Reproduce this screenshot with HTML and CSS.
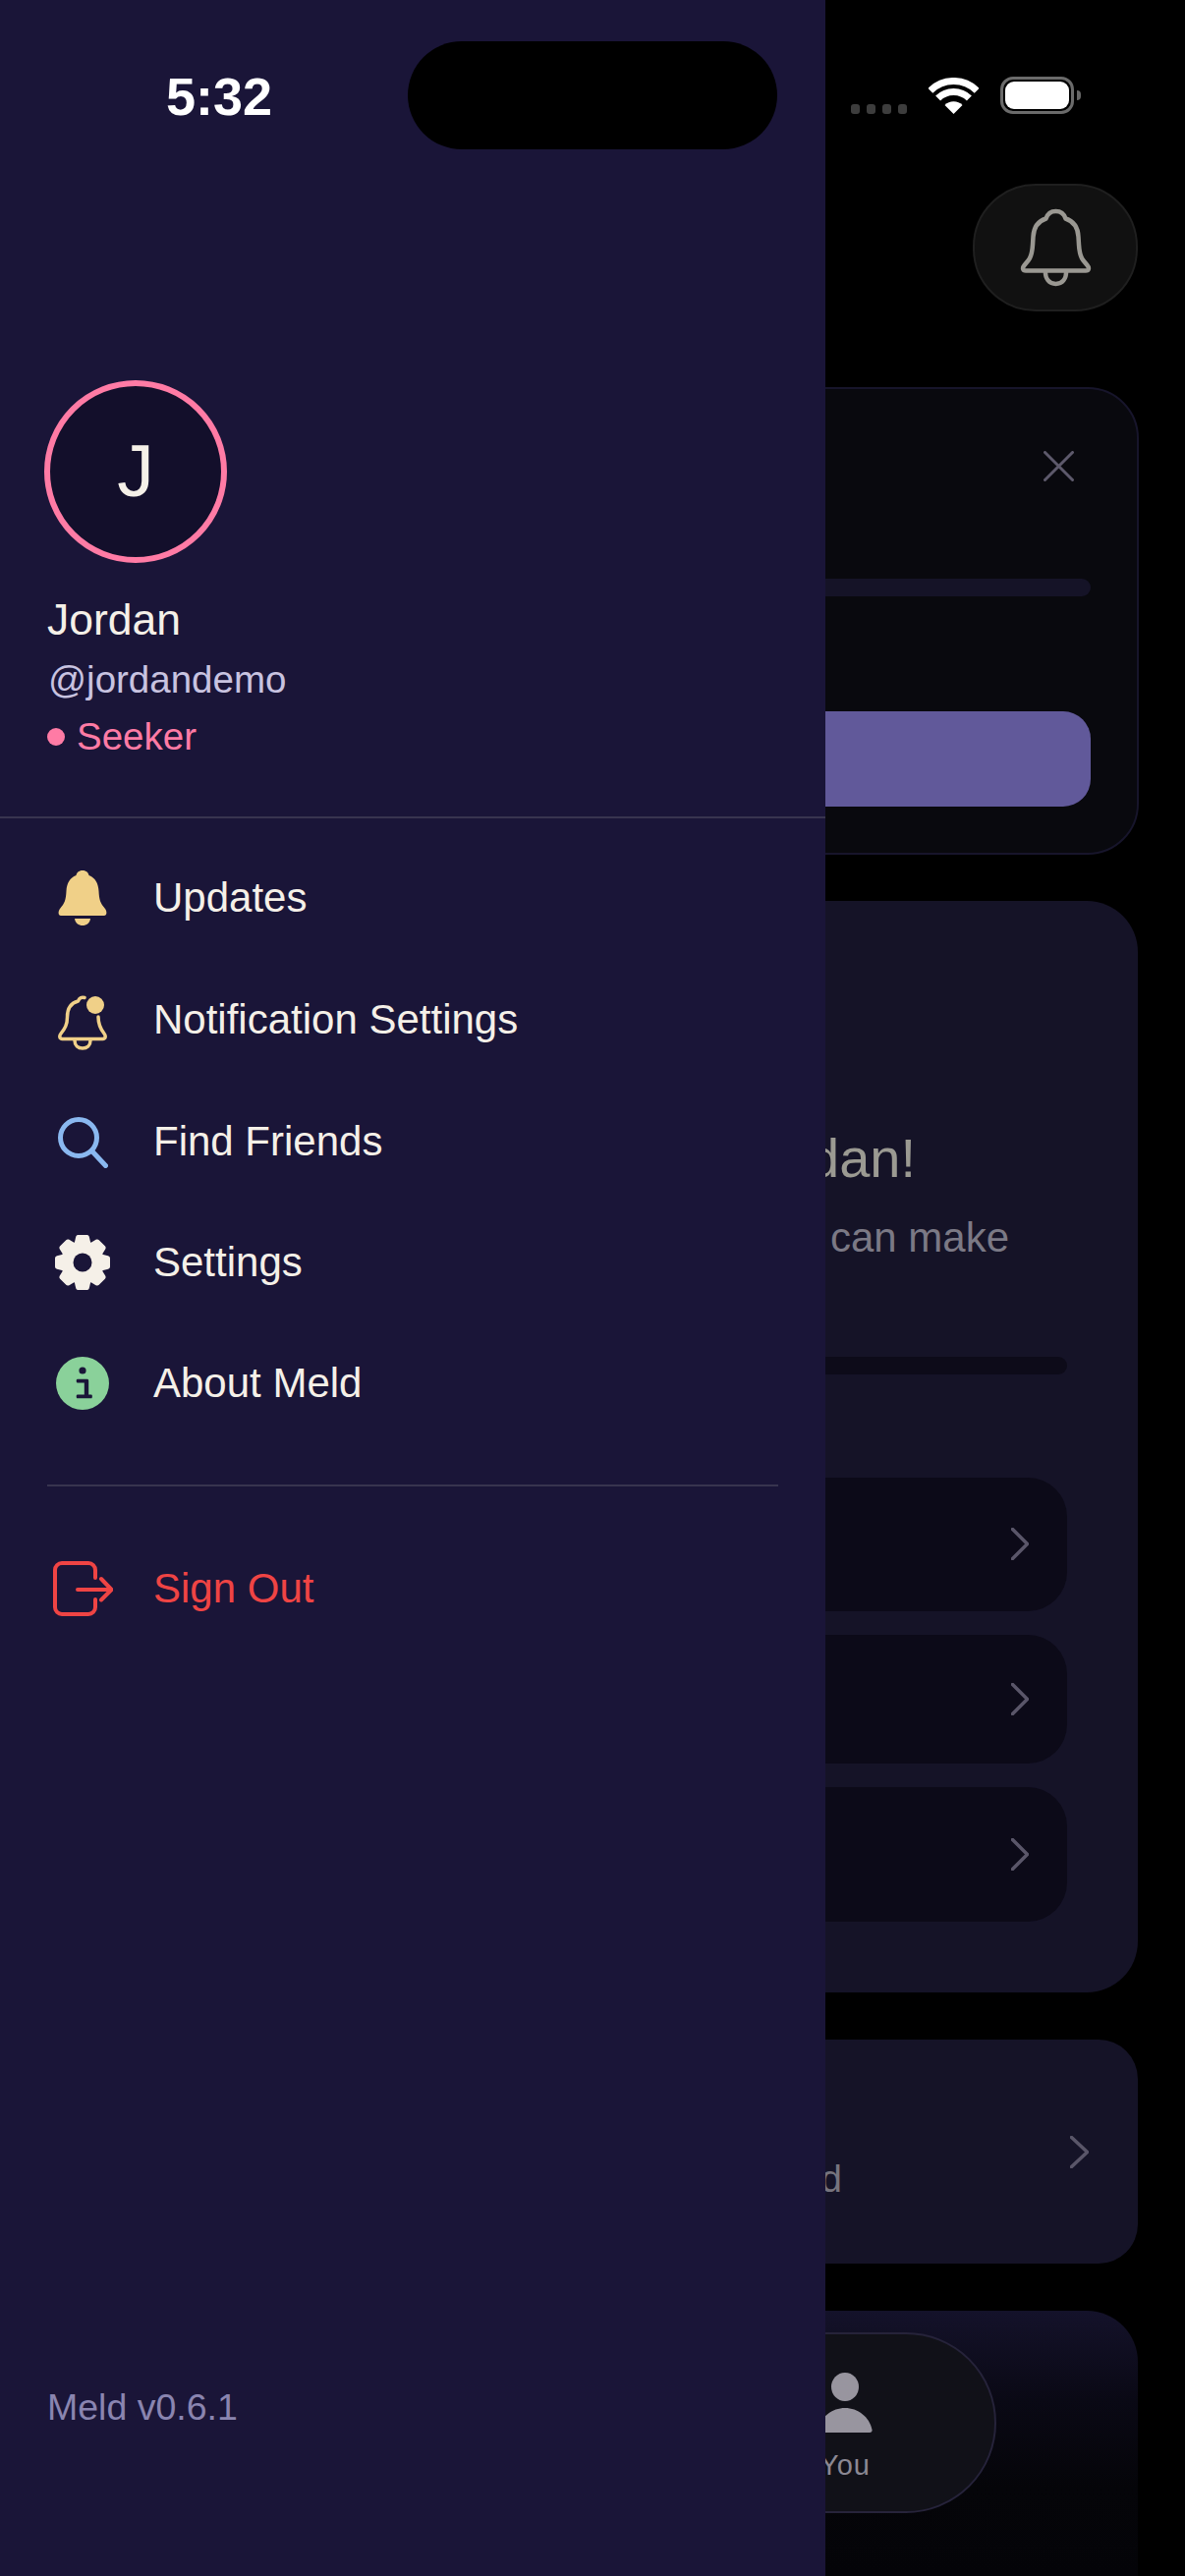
FILE: index.html
```html
<!DOCTYPE html>
<html lang="en">
<head>
<meta charset="utf-8">
<title>Meld</title>
<link rel="stylesheet" href="styles.css">
</head>
<body>
<div class="screen">
  <main class="backdrop">
    <div class="status-icons">
      <div class="signal"><i></i><i></i><i></i><i></i></div>
      <svg class="wifi" viewBox="0 0 51 37" width="51" height="37">
        <path class="wifi-arc" d="M1.8 13.3A33.5 33.5 0 0 1 49.2 13.3"/>
        <path class="wifi-arc" d="M9.6 21.1A22.5 22.5 0 0 1 41.4 21.1"/>
        <path class="wifi-dot" d="M25.5 37L16.5 28A12.7 12.7 0 0 1 34.5 28Z"/>
      </svg>
      <div class="battery"><div class="battery-fill"></div></div>
      <div class="battery-cap"></div>
    </div>

    <button class="bell-btn" type="button" aria-label="Notifications">
      <svg viewBox="0 0 71 78" width="71" height="78" class="bell-svg">
        <path d="M35.500 2C41 2 44 5 45.500 9.500C53 12 58 18 58.500 28L59 36C59.500 44 60.500 48 63 51.500L67.500 57C70 60 69 62.500 66 62.500H5C2 62.500 1 60 3.500 57L8 51.500C10.500 48 11.500 44 12 36L12.500 28C13 18 18 12 25.500 9.500C27 5 30 2 35.500 2Z"/>
        <path d="M25 62.500C24.500 71 29 76 35.500 76C42 76 46.500 71 46 62.500"/>
      </svg>
    </button>

    <section class="banner">
      <svg class="close" viewBox="0 0 31 31" width="31" height="31">
        <path d="M1.500 1.500L29.500 29.500M29.500 1.500L1.500 29.500"/>
      </svg>
      <div class="banner-bar"></div>
      <div class="banner-btn"></div>
    </section>

    <section class="welcome">
      <h1 class="welcome-title">Jordan!</h1>
      <p class="welcome-sub">can make</p>
      <div class="welcome-bar"></div>
      <div class="step step-one">
        <svg class="chevron" viewBox="0 0 18 33" width="18" height="33"><path d="M1.500 1.500L16.500 16.500L1.500 31.500"/></svg>
      </div>
      <div class="step step-two">
        <svg class="chevron" viewBox="0 0 18 33" width="18" height="33"><path d="M1.500 1.500L16.500 16.500L1.500 31.500"/></svg>
      </div>
      <div class="step step-three">
        <svg class="chevron" viewBox="0 0 18 33" width="18" height="33"><path d="M1.500 1.500L16.500 16.500L1.500 31.500"/></svg>
      </div>
    </section>

    <section class="link-card">
      <span class="link-text">d</span>
      <svg class="chevron" viewBox="0 0 19 33" width="19" height="33"><path d="M1.500 1.500L17.500 16.500L1.500 31.500"/></svg>
    </section>

    <section class="tab-card">
      <nav class="tab-pill">
        <div class="tab">
          <svg class="tab-icon" viewBox="0 0 56 61" width="56" height="61">
            <ellipse cx="28" cy="14.500" rx="14" ry="14.500"/>
            <path d="M3 61C1 61 0 59.500 .500 58C3 45 15 36 28 36C41 36 53 45 55.500 58C56 59.500 55 61 53 61Z"/>
          </svg>
          <span class="tab-label">You</span>
        </div>
      </nav>
    </section>
  </main>

  <aside class="drawer">
    <div class="time">5:32</div>
    <div class="profile">
      <div class="avatar">J</div>
      <div class="name">Jordan</div>
      <div class="handle">@jordandemo</div>
      <div class="role"><span class="role-dot"></span>Seeker</div>
    </div>
    <div class="rule"></div>
    <ul class="menu">
      <li class="menu-item">
        <span class="menu-icon">
          <svg viewBox="0 0 50 56" width="50" height="56" class="icon-gold">
            <path d="M25 0C29 0 31 2.500 31.500 5C38 7.500 41 13 41.500 21C42 30 43 33 48 39C50 41.500 50 46 47 46L3 46C0 46 0 41.500 2 39C7 33 8 30 8.500 21C9 13 12 7.500 18.500 5C19 2.500 21 0 25 0Z"/>
            <path d="M17 49H33C32.500 53.500 29 56 25 56C21 56 17.500 53.500 17 49Z"/>
          </svg>
        </span>
        <span>Updates</span>
      </li>
      <li class="menu-item menu-item-notify">
        <span class="menu-icon">
          <svg viewBox="0 0 50 56" width="50" height="56" class="icon-gold-line">
            <path d="M27 2.500C24 1.500 21.500 3 20.500 6C13 8 9.500 14 9.500 22C9.500 30 7 34 3 39C1 41.500 1.500 44.500 4.500 44.500L45.500 44.500C48.500 44.500 49 41.500 47 39C43 34 41 30 41 22"/>
            <path d="M17 46C17 51 20.500 54 25 54C29.500 54 33 51 33 46"/>
            <circle class="icon-gold-dot" cx="38" cy="10" r="9"/>
          </svg>
        </span>
        <span>Notification Settings</span>
      </li>
      <li class="menu-item menu-item-find">
        <span class="menu-icon">
          <svg viewBox="0 0 51 52" width="51" height="52" class="icon-blue">
            <circle cx="21" cy="21" r="18.500"/>
            <path d="M34.500 34.500L48.500 49.500"/>
          </svg>
        </span>
        <span>Find Friends</span>
      </li>
      <li class="menu-item">
        <span class="menu-icon">
          <svg viewBox="-28 -28 56 56" width="56" height="56" class="icon-gear">
            <defs>
              <path id="tooth" d="M-8.500-19L-6.800-26C-6.400-27.400-5.500-28-4.300-28L4.300-28C5.500-28 6.400-27.400 6.800-26L8.500-19Z"/>
            </defs>
            <circle r="22"/>
            <use href="#tooth"/>
            <use href="#tooth" transform="rotate(45)"/>
            <use href="#tooth" transform="rotate(90)"/>
            <use href="#tooth" transform="rotate(135)"/>
            <use href="#tooth" transform="rotate(180)"/>
            <use href="#tooth" transform="rotate(225)"/>
            <use href="#tooth" transform="rotate(270)"/>
            <use href="#tooth" transform="rotate(315)"/>
            <circle class="icon-gear-hole" r="9.500"/>
          </svg>
        </span>
        <span>Settings</span>
      </li>
      <li class="menu-item">
        <span class="menu-icon">
          <svg viewBox="0 0 54 54" width="54" height="54">
            <circle class="icon-info-disc" cx="27" cy="27" r="27"/>
            <circle class="icon-info-mark" cx="27" cy="14" r="3.600"/>
            <path class="icon-info-mark" d="M21.700 22.700H31.500C32.600 22.700 33.200 23.300 33.200 24.400V38.500H36C37.200 38.500 37.200 42.300 36 42.300H21.700C20.400 42.300 20.400 38.500 21.700 38.500H28.800V26.400H21.700C20.400 26.400 20.400 22.700 21.700 22.700Z"/>
          </svg>
        </span>
        <span>About Meld</span>
      </li>
    </ul>
    <div class="rule rule-inset"></div>
    <div class="menu-item signout">
      <span class="menu-icon">
        <svg viewBox="0 0 61 56" width="61" height="56" class="icon-red">
          <path d="M43 17V9A7 7 0 0 0 36 2H9A7 7 0 0 0 2 9V47A7 7 0 0 0 9 54H36A7 7 0 0 0 43 47V39"/>
          <path d="M25 29H59M49 18L59.500 29L49 39.500"/>
        </svg>
      </span>
      <span>Sign Out</span>
    </div>
    <div class="version">Meld v0.6.1</div>
  </aside>

  <div class="island"></div>
</div>
</body>
</html>
```

FILE: styles.css
```css
* {
  box-sizing: border-box;
}

html,
body {
  margin: 0;
  padding: 0;
  background: #000;
}

body {
  font-family: "Liberation Sans", Arial, sans-serif;
}

.screen {
  position: relative;
  width: 1206px;
  height: 2622px;
  overflow: hidden;
  background: #000;
}

/* ---------- dimmed page behind the drawer ---------- */

.backdrop {
  display: flex;
  flex-direction: column;
  height: 100%;
  padding: 78px 48px 0;
}

.backdrop > * {
  flex: none;
}

.status-icons {
  display: flex;
  align-items: flex-end;
  justify-content: flex-end;
  height: 38px;
  margin-right: 58px;
}

.signal {
  display: flex;
  gap: 7px;
  margin-right: 22px;
}

.signal i {
  display: block;
  width: 9px;
  height: 10px;
  border-radius: 3px;
  background: #3d3d3d;
}

.wifi {
  display: block;
  margin-right: 22px;
}

.wifi-arc {
  fill: none;
  stroke: #fff;
  stroke-width: 7;
}

.wifi-dot {
  fill: #fff;
}

.battery {
  width: 75px;
  height: 38px;
  padding: 2px;
  border: 3px solid #6b6b6b;
  border-radius: 13px;
}

.battery-fill {
  width: 100%;
  height: 100%;
  border-radius: 9px;
  background: #fff;
}

.battery-cap {
  width: 4px;
  height: 10px;
  margin: 0 0 14px 3px;
  border-radius: 0 5px 5px 0;
  background: #666;
}

.bell-btn {
  display: flex;
  align-items: center;
  justify-content: center;
  align-self: flex-end;
  width: 168px;
  height: 130px;
  margin-top: 71px;
  padding: 0;
  border: 2px solid #1f1f1f;
  border-radius: 64px;
  background: #111;
}

.bell-svg {
  overflow: visible;
  fill: none;
  stroke: #9a9892;
  stroke-width: 4.500;
  stroke-linejoin: round;
}

.banner {
  display: flex;
  flex-direction: column;
  height: 476px;
  margin-top: 77px;
  margin-right: -1px;
  padding: 63px 47px 0 46px;
  border: 2px solid #17152b;
  border-radius: 52px;
  background: #09090e;
}

.close {
  align-self: flex-end;
  margin-right: 17px;
  fill: none;
  stroke: #5d596b;
  stroke-width: 3;
  stroke-linecap: round;
}

.banner-bar {
  height: 18px;
  margin-top: 99px;
  border-radius: 9px;
  background: #151327;
}

.banner-btn {
  height: 97px;
  margin-top: 117px;
  border-radius: 28px;
  background: #61599a;
}

.welcome {
  display: flex;
  flex-direction: column;
  height: 1111px;
  margin-top: 47px;
  padding: 228.600px 72px 0 48px;
  border-radius: 52px;
  background: #151327;
}

.welcome-title {
  margin: 0;
  padding-right: 154px;
  color: #9b9a92;
  font-size: 56px;
  font-weight: 400;
  line-height: 66px;
  text-align: right;
}

.welcome-sub {
  margin: 23px 0 0;
  padding-right: 59px;
  color: #7b7985;
  font-size: 42px;
  line-height: 50px;
  text-align: right;
}

.welcome-bar {
  height: 18px;
  margin-top: 96px;
  border-radius: 9px;
  background: #0d0b19;
}

.step {
  display: flex;
  align-items: center;
  justify-content: flex-end;
  padding-right: 39px;
  border-radius: 40px;
  background: #0c0a18;
}

.step-one {
  height: 136px;
  margin-top: 105px;
}

.step-two {
  height: 131px;
  margin-top: 24px;
}

.step-three {
  height: 137px;
  margin-top: 24px;
}

.chevron {
  flex: none;
  fill: none;
  stroke: #5a5669;
  stroke-width: 3.500;
  stroke-linecap: round;
  stroke-linejoin: miter;
}

.link-card {
  display: flex;
  align-items: center;
  justify-content: flex-end;
  height: 228px;
  margin-top: 48px;
  padding-right: 50px;
  border-radius: 40px;
  background: #151327;
}

.link-text {
  margin: 55px 232px 0 0;
  color: #76747e;
  font-size: 39px;
  line-height: 46px;
}

.backdrop > .tab-card {
  flex: 1;
  margin-top: 48px;
  padding: 22px 144px 0 48px;
  border-radius: 52px 52px 0 0;
  background: linear-gradient(#14122a 0, #0a0915 90px, #050509 180px, #040408 100%);
}

.tab-pill {
  display: flex;
  justify-content: flex-end;
  height: 184px;
  padding: 39px 102px 0 0;
  border: 2px solid #26233a;
  border-radius: 92px;
  background: #111118;
}

.tab {
  display: flex;
  flex-direction: column;
  align-items: center;
  width: 100px;
}

.tab-icon {
  display: block;
  fill: #98959f;
}

.tab-label {
  margin-top: 16px;
  color: #8b8893;
  font-size: 29px;
  letter-spacing: .8px;
  line-height: 34px;
}

/* ---------- dynamic island ---------- */

.island {
  position: absolute;
  top: 42px;
  left: 415px;
  width: 376px;
  height: 110px;
  border-radius: 55px;
  background: #000;
}

/* ---------- drawer ---------- */

.drawer {
  position: absolute;
  top: 0;
  left: 0;
  display: flex;
  flex-direction: column;
  width: 840px;
  height: 2622px;
  padding-top: 68px;
  background: #1a1538;
  color: #f5f0e8;
}

.time {
  height: 60px;
  padding-left: 169px;
  color: #fff;
  font-size: 54px;
  font-weight: 700;
  line-height: 60px;
}

.profile {
  display: flex;
  flex-direction: column;
  margin-top: 259px;
  padding: 0 48px 58px;
}

.avatar {
  display: flex;
  align-items: center;
  justify-content: center;
  width: 186px;
  height: 186px;
  margin-left: -3px;
  padding-bottom: 2px;
  border: 6px solid #ff7ba5;
  border-radius: 50%;
  background: #130f2b;
  font-size: 75px;
}

.name {
  margin-top: 32px;
  font-size: 44.500px;
  line-height: 52px;
}

.handle {
  margin-top: 12px;
  padding-left: 1px;
  color: #c8c3e0;
  font-size: 38.500px;
  line-height: 46px;
}

.role {
  display: flex;
  align-items: center;
  margin-top: 12px;
  color: #ff7ba5;
  font-size: 38.500px;
  line-height: 46px;
}

.role-dot {
  width: 18px;
  height: 18px;
  margin-right: 12px;
  border-radius: 50%;
  background: #ff7ba5;
}

.rule {
  flex: none;
  height: 2px;
  background: #38344f;
}

.rule-inset {
  margin: 42.500px 48px 0;
}

.menu {
  margin: 18.500px 0 0;
  padding: 0;
  list-style: none;
}

.menu-item {
  display: flex;
  align-items: center;
  height: 124px;
  padding-left: 48px;
  font-size: 42px;
}

.menu-item:nth-child(4) {
  height: 123px;
}

.menu-item:nth-child(5) {
  height: 122px;
}

.menu-item-notify .menu-icon {
  padding-top: 6px;
}

.menu-item-find .menu-icon {
  padding-top: 3px;
}

.menu-icon {
  display: flex;
  flex: none;
  align-items: center;
  justify-content: center;
  width: 72px;
  margin-right: 36px;
}

.menu-icon svg {
  display: block;
}

.icon-gold {
  fill: #f0d088;
}

.icon-gold-line {
  fill: none;
  stroke: #f0d088;
  stroke-width: 3.500;
  stroke-linecap: round;
  stroke-linejoin: round;
}

.icon-gold-dot {
  fill: #f0d088;
  stroke: none;
}

.icon-blue {
  fill: none;
  stroke: #8ab8f0;
  stroke-width: 5;
  stroke-linecap: round;
}

.icon-gear {
  fill: #f5f0e8;
}

.icon-gear-hole {
  fill: #1a1538;
}

.icon-info-disc {
  fill: #8ad19a;
}

.icon-info-mark {
  fill: #1a1538;
}

.icon-red {
  fill: none;
  stroke: #ef4444;
  stroke-width: 4;
  stroke-linecap: round;
  stroke-linejoin: round;
}

.signout {
  height: 124px;
  margin-top: 41.500px;
  color: #ef4444;
}

.version {
  margin-top: auto;
  padding: 0 0 150px 48px;
  color: #8a85b0;
  font-size: 37.500px;
  line-height: 44px;
}
```
